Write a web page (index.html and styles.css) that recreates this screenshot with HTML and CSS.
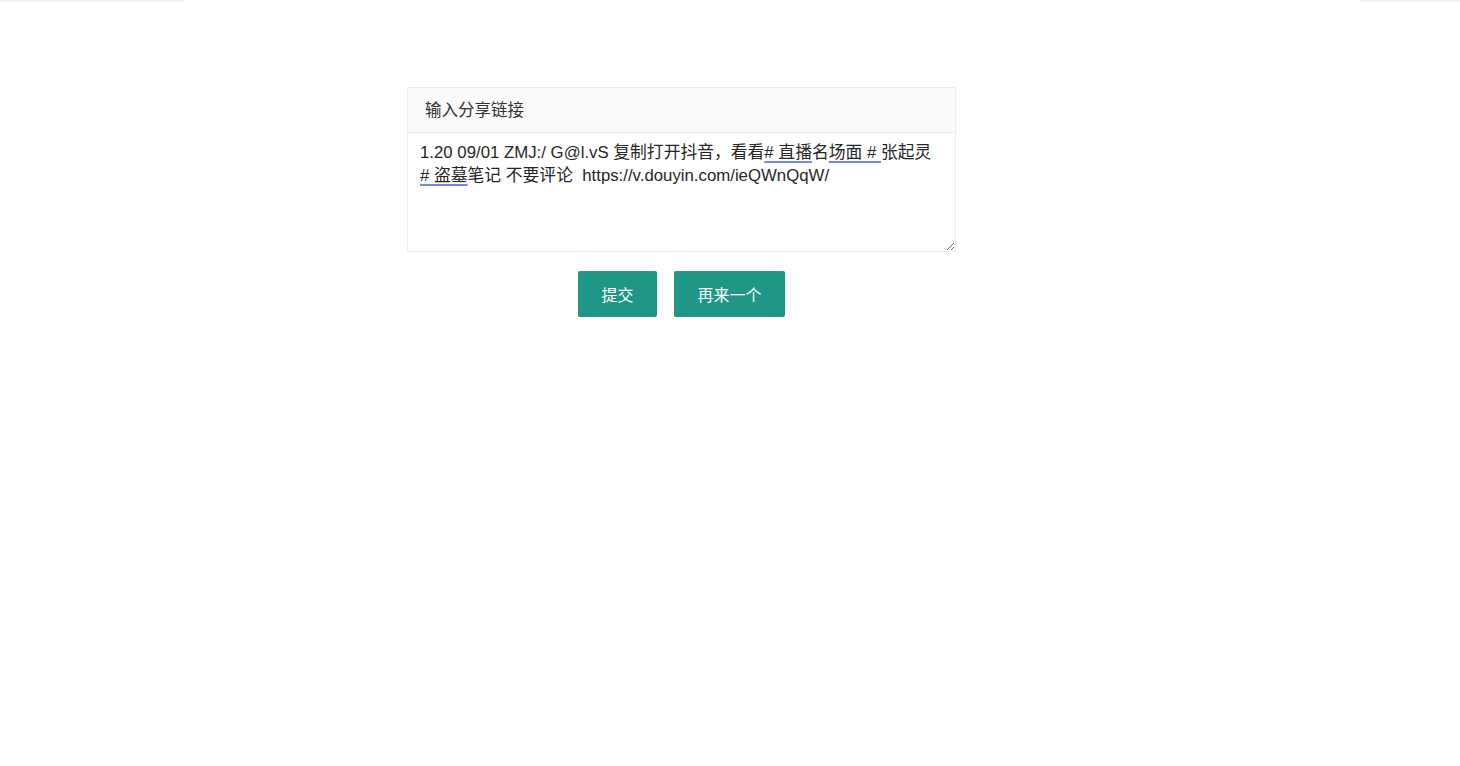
FILE: index.html
```html
<!DOCTYPE html>
<html lang="zh-CN">
<head>
<meta charset="utf-8">
<title>输入分享链接</title>
<link rel="stylesheet" href="styles.css">
</head>
<body>
<div class="topbar"><span class="seg seg-left"></span><span class="seg seg-right"></span></div>
<main class="wrap">
  <section class="panel">
    <div class="panel-head">输入分享链接</div>
    <div class="panel-body" role="textbox" aria-multiline="true">1.20 09/01 ZMJ:/ G@l.vS 复制打开抖音，看看<span class="ul"># 直播</span>名<span class="ul">场面 # </span>张起灵<br><span class="ul"># 盗墓</span>笔记 不要评论&nbsp; https://v.douyin.com/ieQWnQqW/</div>
  </section>
  <div class="actions">
    <button class="btn">提交</button>
    <button class="btn">再来一个</button>
  </div>
</main>
</body>
</html>
```

FILE: styles.css
```css
html, body {
  margin: 0;
  padding: 0;
  background: #fff;
}
body {
  font-family: "Liberation Sans", "Noto Sans CJK SC", sans-serif;
  color: #333;
}
.topbar {
  height: 2px;
  display: flex;
  justify-content: space-between;
}
.seg {
  display: block;
  height: 2px;
  background: #f2f2f2;
}
.seg-left { width: 185px; }
.seg-right { width: 100px; }
.wrap {
  padding-top: 85px;
  width: 549px;
  margin-left: 407px;
}
.panel {
  border: 1px solid #ececec;
  border-radius: 2px;
  background: #fff;
}
.panel-head {
  height: 44px;
  line-height: 44px;
  padding: 0 17px;
  background: #fafafa;
  border-bottom: 1px solid #ececec;
  font-size: 16.5px;
  color: #333;
}
.panel-body {
  height: 102px;
  padding: 8px 12px;
  font-size: 16.8px;
  line-height: 23px;
  color: #262626;
  resize: vertical;
  overflow: auto;
}
.ul {
  text-decoration: underline;
  text-decoration-color: #7a86e2;
  text-decoration-thickness: 2px;
  text-underline-offset: 3px;
}
.actions {
  display: flex;
  justify-content: center;
  gap: 17px;
  margin-top: 19px;
}
.btn {
  height: 46px;
  padding: 0 23.5px;
  border: none;
  border-radius: 2px;
  background: #1f9686;
  color: #fff;
  font-family: "Liberation Sans", "Noto Sans CJK SC", sans-serif;
  font-size: 16px;
  cursor: pointer;
}
```
